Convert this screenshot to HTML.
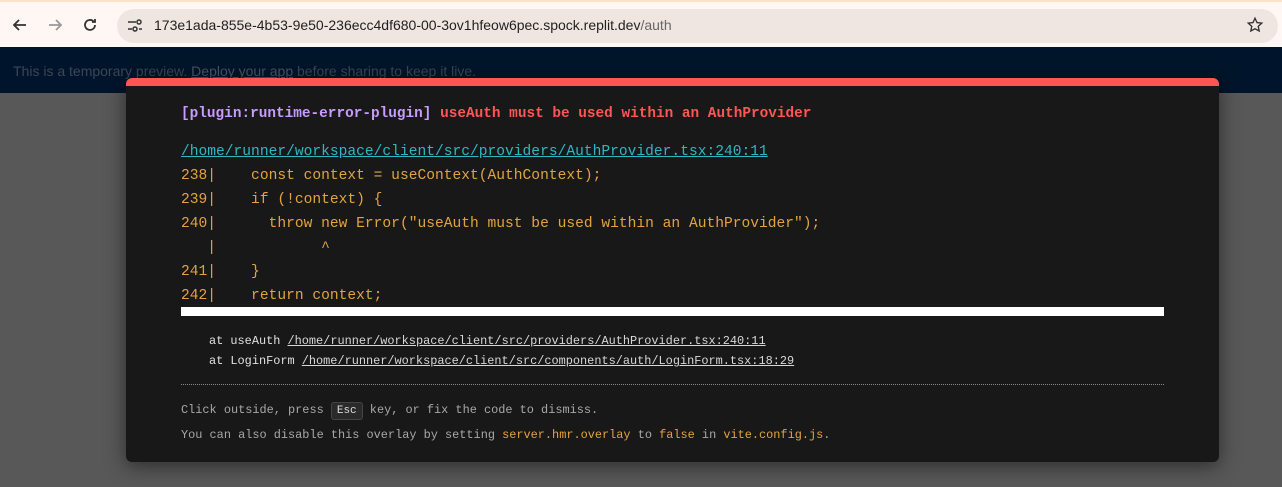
<!DOCTYPE html>
<html><head><style>
*{margin:0;padding:0;box-sizing:border-box}
body{width:1282px;height:487px;overflow:hidden;background:#585858;font-family:"Liberation Sans",sans-serif;position:relative}
.top{position:absolute;left:0;top:0;width:1282px;height:47px;background:#fff7f3;border-top:2px solid #fde0c8}
.pill{position:absolute;left:117px;top:7px;width:1161px;height:34px;background:#f0e6e1;border-radius:17px}
.url{position:absolute;left:154px;top:15px;font-size:14px;color:#1f1f1f}
.url span{color:#666}
.banner{position:absolute;left:0;top:47px;width:1282px;height:46px;background:#00152b}
.banner p{position:absolute;left:13px;top:16px;font-size:14px;color:#3c4656}
.banner u{color:#4a5463}
.box{position:absolute;left:126px;top:78px;width:1093px;height:384px;background:#181818;border-top:8px solid #ff5555;border-radius:6px;box-shadow:0 4px 20px rgba(0,0,0,.5);font-family:"Liberation Mono",monospace}
.t{position:absolute;left:55px;top:20px;font-size:14.4px;font-weight:bold;white-space:pre}
.code{position:absolute;left:55px;top:54px;font-size:14.6px;line-height:24px;color:#e3a341;white-space:pre}
.cy{color:#2fb7c4;text-decoration:underline}
.sb{position:absolute;left:55px;top:221px;width:983px;height:9px;background:#fff}
.st{position:absolute;left:83px;top:245px;font-size:11.9px;line-height:20px;color:#e0e0e0;white-space:pre}
.st u{color:#d8d8d8}
.hr{position:absolute;left:55px;top:298px;width:983px;border-top:1px dotted #888}
.ft{position:absolute;left:55px;top:312px;font-size:11.9px;line-height:24px;color:#a8a8a8;white-space:pre}
.ft b{font-weight:normal;color:#e3a341}
kbd{font-family:inherit;background:#2a2a2a;border:1px solid #444;border-radius:3px;padding:2px 5px;color:#ddd;font-size:11px}
</style></head><body>
<div class="top">
<svg style="position:absolute;left:10px;top:13px" width="20" height="20" viewBox="0 0 20 20"><path d="M16 10H4M9 5L4 10l5 5" stroke="#333" stroke-width="1.8" fill="none"/></svg>
<svg style="position:absolute;left:45px;top:13px" width="20" height="20" viewBox="0 0 20 20"><path d="M4 10h12M11 5l5 5-5 5" stroke="#999" stroke-width="1.8" fill="none"/></svg>
<svg style="position:absolute;left:80px;top:13px" width="20" height="20" viewBox="0 0 20 20"><path d="M15 10a5 5 0 1 1-1.5-3.6M15 4v3h-3" stroke="#333" stroke-width="1.8" fill="none"/></svg>
<div class="pill"></div>
<svg style="position:absolute;left:126px;top:15px" width="18" height="18" viewBox="0 0 18 18"><path d="M2 5h8M2 12h4M13 12h3" stroke="#333" stroke-width="1.6"/><circle cx="13" cy="5" r="2" stroke="#333" stroke-width="1.5" fill="none"/><circle cx="9" cy="12" r="2" stroke="#333" stroke-width="1.5" fill="none"/></svg>
<div class="url">173e1ada-855e-4b53-9e50-236ecc4df680-00-3ov1hfeow6pec.spock.replit.dev<span>/auth</span></div>
<svg style="position:absolute;left:1246px;top:14px" width="18" height="18" viewBox="0 0 24 24"><path d="M12 3l2.7 5.8 6.3.7-4.7 4.3 1.3 6.2L12 17l-5.6 3 1.3-6.2L3 9.5l6.3-.7z" stroke="#333" stroke-width="1.8" fill="none"/></svg>
</div>
<div class="banner"><p>This is a temporary preview. <u>Deploy your app</u> before sharing to keep it live.</p></div>
<div class="box">
<div class="t"><span style="color:#c79bff">[plugin:runtime-error-plugin]</span> <span style="color:#ff5555">useAuth must be used within an AuthProvider</span></div>
<div class="code"><span class="cy">/home/runner/workspace/client/src/providers/AuthProvider.tsx:240:11</span>
238|    const context = useContext(AuthContext);
239|    if (!context) {
240|      throw new Error("useAuth must be used within an AuthProvider");
   |            ^
241|    }
242|    return context;</div>
<div class="sb"></div>
<div class="st">at useAuth <u>/home/runner/workspace/client/src/providers/AuthProvider.tsx:240:11</u>
at LoginForm <u>/home/runner/workspace/client/src/components/auth/LoginForm.tsx:18:29</u></div>
<div class="hr"></div>
<div class="ft">Click outside, press <kbd>Esc</kbd> key, or fix the code to dismiss.
You can also disable this overlay by setting <b>server.hmr.overlay</b> to <b>false</b> in <b>vite.config.js</b>.</div>
</div>
</body></html>
